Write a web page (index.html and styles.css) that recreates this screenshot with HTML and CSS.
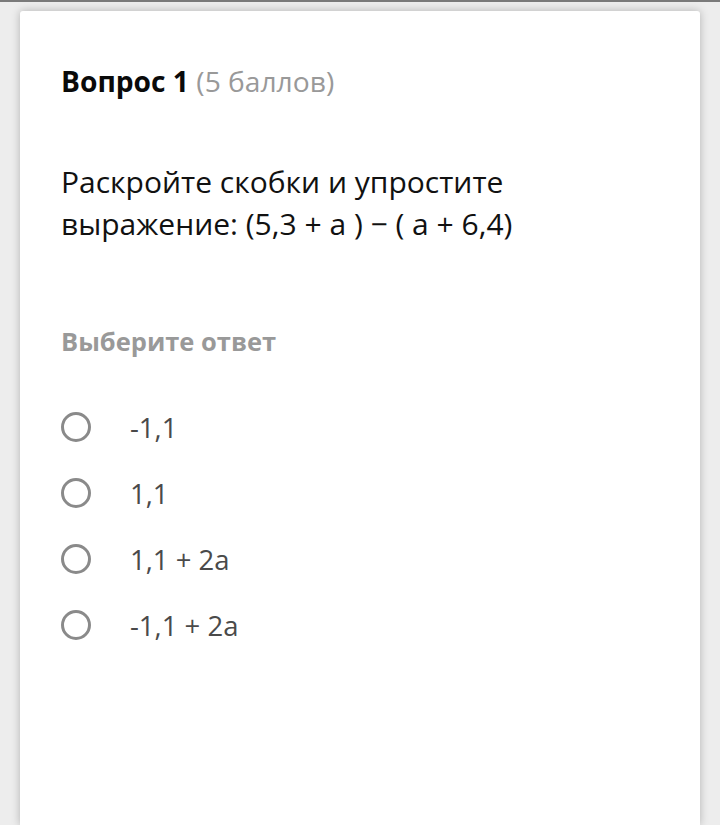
FILE: index.html
```html
<!DOCTYPE html>
<html lang="ru">
<head>
    <meta charset="UTF-8">
    <meta name="viewport" content="width=device-width, initial-scale=1.0">
    <title>Вопрос 1</title>
    <link rel="stylesheet" href="styles.css">
</head>
<body>
    <div class="top-line"></div>
    <div class="card">
        <h2 class="question-title">Вопрос 1 <span class="points">(5 баллов)</span></h2>
        <p class="question-text">Раскройте скобки и упростите выражение: (5,3 + a ) − ( a + 6,4)</p>
        <div class="answer-label">Выберите ответ</div>
        <ul class="options">
            <li class="option"><span class="radio"></span><span class="option-text">-1,1</span></li>
            <li class="option"><span class="radio"></span><span class="option-text">1,1</span></li>
            <li class="option"><span class="radio"></span><span class="option-text">1,1 + 2a</span></li>
            <li class="option"><span class="radio"></span><span class="option-text">-1,1 + 2a</span></li>
        </ul>
    </div>
</body>
</html>
```

FILE: styles.css
```css
/* Estilos gerais */
body {
    font-family: 'Open Sans', 'Noto Sans', sans-serif;
    background-color: #ededed;
    margin: 0;
    height: 100vh;
    overflow: hidden;
    color: #111;
}

.top-line {
    height: 2px;
    background-color: #7a7a7a;
}

/* O cartão continua além da borda inferior da tela */
.card {
    box-sizing: border-box;
    height: calc(100vh - 11px);
    background-color: #ffffff;
    margin: 9px 20px 0 20px;
    padding: 52px 41px 0 41px;
    box-shadow: 0 0 8px rgba(0, 0, 0, 0.25);
    border-radius: 3px 3px 0 0;
}

.question-title {
    font-size: 28.2px;
    font-weight: bold;
    margin: 0;
    line-height: 36px;
    color: #0a0a0a;
}

.points {
    font-weight: normal;
    color: #999;
}

.question-text {
    font-size: 30px;
    line-height: 42px;
    margin: 62px 0 0 0;
    color: #111;
}

.answer-label {
    font-size: 25.5px;
    font-weight: bold;
    color: #999;
    margin-top: 79px;
    line-height: 34px;
}

.options {
    list-style: none;
    padding: 0;
    margin: 36px 0 0 0;
}

.option {
    display: flex;
    align-items: center;
    height: 66px;
}

.radio {
    width: 24px;
    height: 24px;
    border: 3px solid #8a8a8a;
    border-radius: 50%;
    flex-shrink: 0;
}

.option-text {
    font-size: 27.5px;
    color: #4a4a4a;
    margin-left: 39px;
}
```
